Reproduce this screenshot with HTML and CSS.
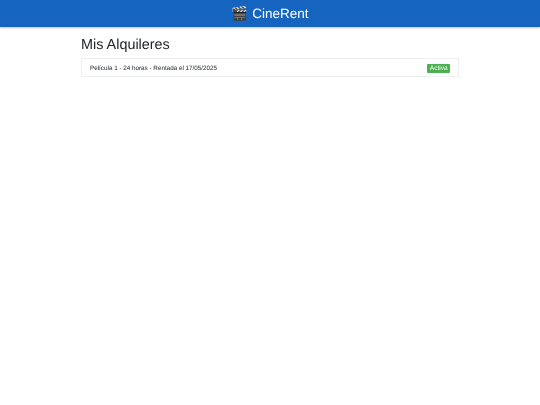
FILE: index.html
```html
<!DOCTYPE html>
<html lang="es">
<head>
<meta charset="utf-8">
<title>CineRent</title>
<link rel="stylesheet" href="styles.css">
</head>
<body>
<header class="topbar"><span class="brand">🎬 CineRent</span></header>
<main class="container">
<h1 class="title">Mis Alquileres</h1>
<ul class="list">
<li class="item"><span>Película 1 - 24 horas - Rentada el 17/05/2025</span><span class="badge">Activa</span></li>
</ul>
</main>
</body>
</html>
```
FILE: styles.css
```css
* { box-sizing: border-box; }
html, body { margin: 0; padding: 0; background: #fff; }
body { font-family: "Liberation Sans", Arial, sans-serif; color: #212529; text-rendering: geometricPrecision; }
.topbar { height: 27px; background: #1565c0; box-shadow: 0 1px 2px rgba(0,0,0,.25); display: flex; align-items: center; justify-content: center; will-change: transform; }
.brand { color: #fff; font-size: 13.5px; line-height: 1; }
.container { width: 378px; margin: 0 auto; padding-top: 9px; will-change: transform; }
.title { margin: 0 0 4px; font-size: 14.4px; font-weight: 400; line-height: 18px; }
.list { list-style: none; margin: 0; padding: 0; }
.item { display: flex; justify-content: space-between; align-items: center; height: 19px; padding: 1px 8px 0; border: 1px solid #eceef0; font-size: 6.3px; }
.badge { background: #4caf50; color: #fff; padding: 1px 2.5px; border-radius: 1px; font-size: 6.5px; }
```
